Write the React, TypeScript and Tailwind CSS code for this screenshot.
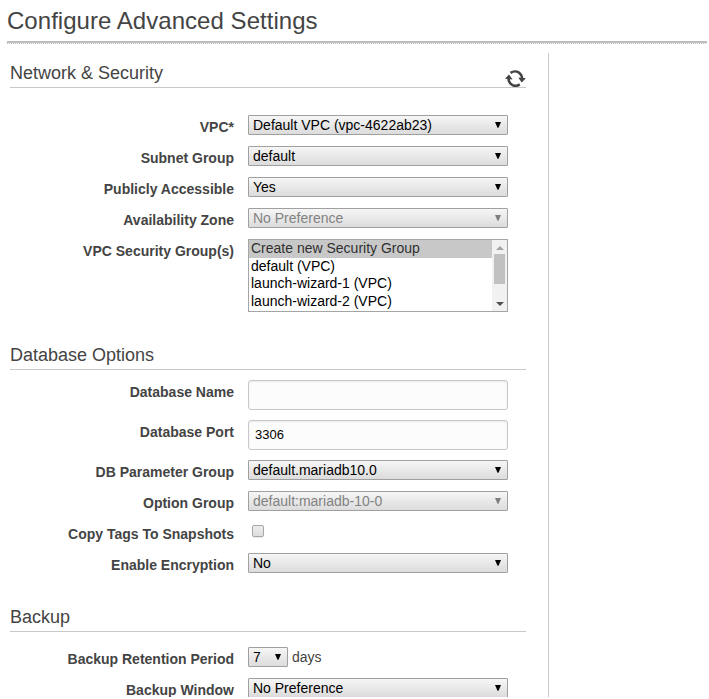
import type { ReactNode } from 'react';

function Arrow({ muted = false }: { muted?: boolean }) {
  return (
    <svg width="6" height="7" viewBox="0 0 6 7" className={muted ? 'text-[#7d7d7d]' : 'text-black'}>
      <path d="M0 0H6L3.5 5.8H2.5Z" fill="currentColor" />
    </svg>
  );
}

function Select({ value, disabled = false, width = 'w-[260px]' }: { value: string; disabled?: boolean; width?: string }) {
  return (
    <div
      className={`${width} flex h-5 shrink-0 items-center justify-between rounded-[1px] border border-[#a0a0a0] bg-linear-to-b from-[#f6f6f6] to-[#dcdcdc] pr-[6px] pl-1 leading-[18px] ${disabled ? 'text-[#828282]' : 'text-black'}`}
    >
      <span>{value}</span>
      <Arrow muted={disabled} />
    </div>
  );
}

function Input({ value = '' }: { value?: string }) {
  return (
    <div className="h-[30px] w-[260px] rounded-[3px] border border-[#c8c8c8] bg-[#fcfcfc] px-[6px] text-[13px] leading-7 text-black shadow-[inset_0_1px_2px_rgba(0,0,0,0.08)]">
      {value}
    </div>
  );
}

function Row({ label, height = 'h-[31px]', children }: { label: string; height?: string; children: ReactNode }) {
  return (
    <div className={`${height} flex shrink-0 items-start`}>
      <div className="mr-[14px] w-[224px] shrink-0 pt-[2px] text-right font-bold whitespace-nowrap">{label}</div>
      {children}
    </div>
  );
}

function Heading({ children, icon }: { children: ReactNode; icon?: ReactNode }) {
  return (
    <div className="flex h-[26px] shrink-0 justify-between border-b border-[#c8c8c8]">
      <h2 className="text-[18px] leading-[22px]">{children}</h2>
      {icon}
    </div>
  );
}

function Refresh() {
  return (
    <svg width="21" height="17" viewBox="0 0 21 17" className="mt-[8px]" fill="none">
      <path d="M5.5 2.9C9 0.6 13 1.3 15.3 3.8C16.5 5.1 17.1 6.5 17.2 8.4" stroke="#444" strokeWidth="2.6" />
      <path d="M13.2 7.6L20.9 8.2L16.7 12.4Z" fill="#444" />
      <path d="M14.8 14.4C11.5 16.5 7.8 15.9 5.5 13.6C4.2 12.3 3.5 10.7 3.5 8.6" stroke="#444" strokeWidth="2.6" />
      <path d="M0 8.8L7.6 9.4L4 4.6Z" fill="#444" />
    </svg>
  );
}

function ListBox() {
  return (
    <div className="flex h-[73px] w-[260px] border border-[#a5a5a5] bg-white text-black">
      <ul className="flex-1">
        <li className="h-[18px] bg-[#c8c8c8] pl-[2px] leading-[17px] text-[#303030]">Create new Security Group</li>
        <li className="h-[17px] pl-[2px] leading-[17px]">default (VPC)</li>
        <li className="h-[18px] pl-[2px] leading-[17px]">launch-wizard-1 (VPC)</li>
        <li className="h-[18px] pl-[2px] leading-[17px]">launch-wizard-2 (VPC)</li>
      </ul>
      <div className="flex w-[15px] flex-col items-center justify-between bg-[#f1f1f1] pb-[5px]">
        <div className="flex flex-col items-center">
          <svg width="8" height="4" viewBox="0 0 8 4" className="mt-[6px]">
            <path d="M0 4L4 0L8 4Z" fill="#a3a3a3" />
          </svg>
          <div className="mt-1 h-[30px] w-[11px] bg-[#c1c1c1]" />
        </div>
        <svg width="8" height="4" viewBox="0 0 8 4">
          <path d="M0 0L4 4L8 0Z" fill="#505050" />
        </svg>
      </div>
    </div>
  );
}

export default function App() {
  return (
    <div className="h-[699px] w-[709px] overflow-hidden bg-white font-['Liberation_Sans',Arial,sans-serif] text-[14px] leading-5 text-[#444]">
      <div className="flex h-[697px] flex-col overflow-hidden">
        <header className="ml-[7px] w-[700px] shrink-0">
          <h1 className="h-[41px] pt-[7px] text-[24px] leading-7 tracking-[0.04px]">Configure Advanced Settings</h1>
          <div className="h-[2px] bg-[#bdbdbd]" />
          <div className="h-px bg-[repeating-linear-gradient(90deg,#bdbdbd_0_1px,#fff_1px_2px)]" />
        </header>
        <div className="mt-[9px] flex min-h-0 flex-1 pl-[10px]">
          <main className="w-[516px] shrink-0 pt-[9px]">
            <Heading icon={<Refresh />}>Network &amp; Security</Heading>
            <div className="h-[27px]" />
            <Row label="VPC*"><Select value="Default VPC (vpc-4622ab23)" /></Row>
            <Row label="Subnet Group"><Select value="default" /></Row>
            <Row label="Publicly Accessible"><Select value="Yes" /></Row>
            <Row label="Availability Zone"><Select value="No Preference" disabled /></Row>
            <Row label="VPC Security Group(s)" height="h-[105px]"><ListBox /></Row>

            <Heading>Database Options</Heading>
            <div className="h-[10px]" />
            <Row label="Database Name" height="h-10"><Input /></Row>
            <Row label="Database Port" height="h-10"><Input value="3306" /></Row>
            <Row label="DB Parameter Group"><Select value="default.mariadb10.0" /></Row>
            <Row label="Option Group"><Select value="default:mariadb-10-0" disabled /></Row>
            <Row label="Copy Tags To Snapshots">
              <div className="mt-[3px] ml-1 size-3 rounded-[2px] border border-[#a6a6a6] bg-linear-to-b from-[#ececec] to-[#dedede] shadow-[0_1px_1px_rgba(0,0,0,0.08)]" />
            </Row>
            <Row label="Enable Encryption" height="h-[53px]"><Select value="No" /></Row>

            <Heading>Backup</Heading>
            <div className="h-[15px]" />
            <Row label="Backup Retention Period">
              <Select value="7" width="w-10" />
              <span className="ml-1">days</span>
            </Row>
            <Row label="Backup Window"><Select value="No Preference" /></Row>
          </main>
          <aside className="ml-[22px] flex-1 border-l border-[#c8c8c8]" />
        </div>
      </div>
    </div>
  );
}
